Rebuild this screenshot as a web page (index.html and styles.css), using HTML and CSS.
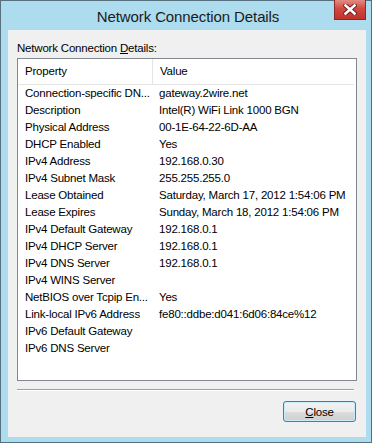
FILE: index.html
```html
<!DOCTYPE html>
<html>
<head>
  <title>Network Connection Details</title>
  <link rel="stylesheet" href="styles.css">
</head>
<body>
  <div class="window">
    <!-- Title bar -->
    <div class="titlebar">
      <div class="title">Network Connection Details</div>
      <div class="close-x">
        <svg width="14" height="11" viewBox="0 0 14 11">
          <path d="M2.5 1.5 L11.5 9.5 M11.5 1.5 L2.5 9.5" stroke="#6e1a18" stroke-width="4.4" stroke-linecap="square"/>
          <path d="M2.5 1.5 L11.5 9.5 M11.5 1.5 L2.5 9.5" stroke="#fff" stroke-width="2.6" stroke-linecap="square"/>
        </svg>
      </div>
    </div>

    <!-- Client area -->
    <div class="client">
      <div class="caption">Network Connection <u>D</u>etails:</div>

      <div class="listview">
        <div class="lv-head">
          <div class="col-prop">Property</div>
          <div class="col-val">Value</div>
        </div>
        <div class="lv-body">
          <div class="row"><div class="col-prop">Connection-specific DN...</div><div class="col-val">gateway.2wire.net</div></div>
          <div class="row"><div class="col-prop">Description</div><div class="col-val">Intel(R) WiFi Link 1000 BGN</div></div>
          <div class="row"><div class="col-prop">Physical Address</div><div class="col-val">00-1E-64-22-6D-AA</div></div>
          <div class="row"><div class="col-prop">DHCP Enabled</div><div class="col-val">Yes</div></div>
          <div class="row"><div class="col-prop">IPv4 Address</div><div class="col-val">192.168.0.30</div></div>
          <div class="row"><div class="col-prop">IPv4 Subnet Mask</div><div class="col-val">255.255.255.0</div></div>
          <div class="row"><div class="col-prop">Lease Obtained</div><div class="col-val">Saturday, March 17, 2012 1:54:06 PM</div></div>
          <div class="row"><div class="col-prop">Lease Expires</div><div class="col-val">Sunday, March 18, 2012 1:54:06 PM</div></div>
          <div class="row"><div class="col-prop">IPv4 Default Gateway</div><div class="col-val">192.168.0.1</div></div>
          <div class="row"><div class="col-prop">IPv4 DHCP Server</div><div class="col-val">192.168.0.1</div></div>
          <div class="row"><div class="col-prop">IPv4 DNS Server</div><div class="col-val">192.168.0.1</div></div>
          <div class="row"><div class="col-prop">IPv4 WINS Server</div><div class="col-val"></div></div>
          <div class="row"><div class="col-prop">NetBIOS over Tcpip En...</div><div class="col-val">Yes</div></div>
          <div class="row"><div class="col-prop">Link-local IPv6 Address</div><div class="col-val">fe80::ddbe:d041:6d06:84ce%12</div></div>
          <div class="row"><div class="col-prop">IPv6 Default Gateway</div><div class="col-val"></div></div>
          <div class="row"><div class="col-prop">IPv6 DNS Server</div><div class="col-val"></div></div>
        </div>
      </div>

      <div class="separator"></div>

      <div class="buttons">
        <button class="btn"><u>C</u>lose</button>
      </div>
    </div>
  </div>
</body>
</html>
```

FILE: styles.css
```css
/* Base */
body, html {
  margin: 0;
  padding: 0;
  background: #ffffff;
}

body {
  font-family: 'Liberation Sans', Arial, sans-serif;
  font-size: 11.5px;
  letter-spacing: -0.2px;
  color: #000;
}

/* Window frame */
.window {
  position: relative;
  width: 372px;
  height: 443px;
  box-sizing: border-box;
  border: 1px solid #56707e;
  background: #acdcee;
  display: flex;
  flex-direction: column;
}

.titlebar {
  height: 29px;
  display: flex;
  align-items: center;
  justify-content: center;
}

.title {
  font-size: 15px;
  letter-spacing: -0.1px;
  color: #1b1b1b;
  margin-left: 4px;
  margin-top: 1px;
}

.close-x {
  position: absolute;
  top: -1px;
  right: 5px;
  width: 32px;
  height: 20px;
  box-sizing: border-box;
  border: 1px solid #8a2a26;
  border-top: none;
  background: linear-gradient(to bottom, #e48b84 0%, #cf4b42 45%, #c1312a 100%);
  display: flex;
  align-items: center;
  justify-content: center;
}

.client {
  flex: 1;
  margin: 0 5px 5px 7px;
  background: #f0f0f0;
  display: flex;
  flex-direction: column;
  padding: 10px 9px 0 9px;
}

.caption {
  height: 18px;
  line-height: 16px;
}

/* List view */
.listview {
  height: 323px;
  box-sizing: border-box;
  border: 1px solid #828790;
  background: #fff;
}

.lv-head {
  display: flex;
  height: 25px;
  line-height: 24px;
  border-bottom: 1px solid #e5e5e5;
  margin-right: 2px;
}

.lv-head .col-prop {
  border-right: 1px solid #e5e5e5;
}

.row {
  display: flex;
  height: 17px;
  line-height: 17px;
}

.col-prop {
  width: 127px;
  padding-left: 7px;
  white-space: nowrap;
}

.col-val {
  padding-left: 7px;
  white-space: nowrap;
}

.separator {
  margin: 8px 3px 0 0;
  border-top: 1px solid #a0a0a0;
  border-bottom: 1px solid #fff;
}

.buttons {
  display: flex;
  justify-content: flex-end;
  padding: 10px 1px 0 0;
}

.btn {
  width: 73px;
  height: 21px;
  padding: 0;
  font-family: inherit;
  font-size: 11.5px;
  letter-spacing: -0.2px;
  color: #000;
  border: 1px solid #3c7fb1;
  border-radius: 3px;
  box-shadow: inset 0 0 0 1px #c8ecf9;
  background: linear-gradient(to bottom, #f2f2f2 0%, #ebebeb 50%, #dddddd 51%, #cfcfcf 100%);
}
```
